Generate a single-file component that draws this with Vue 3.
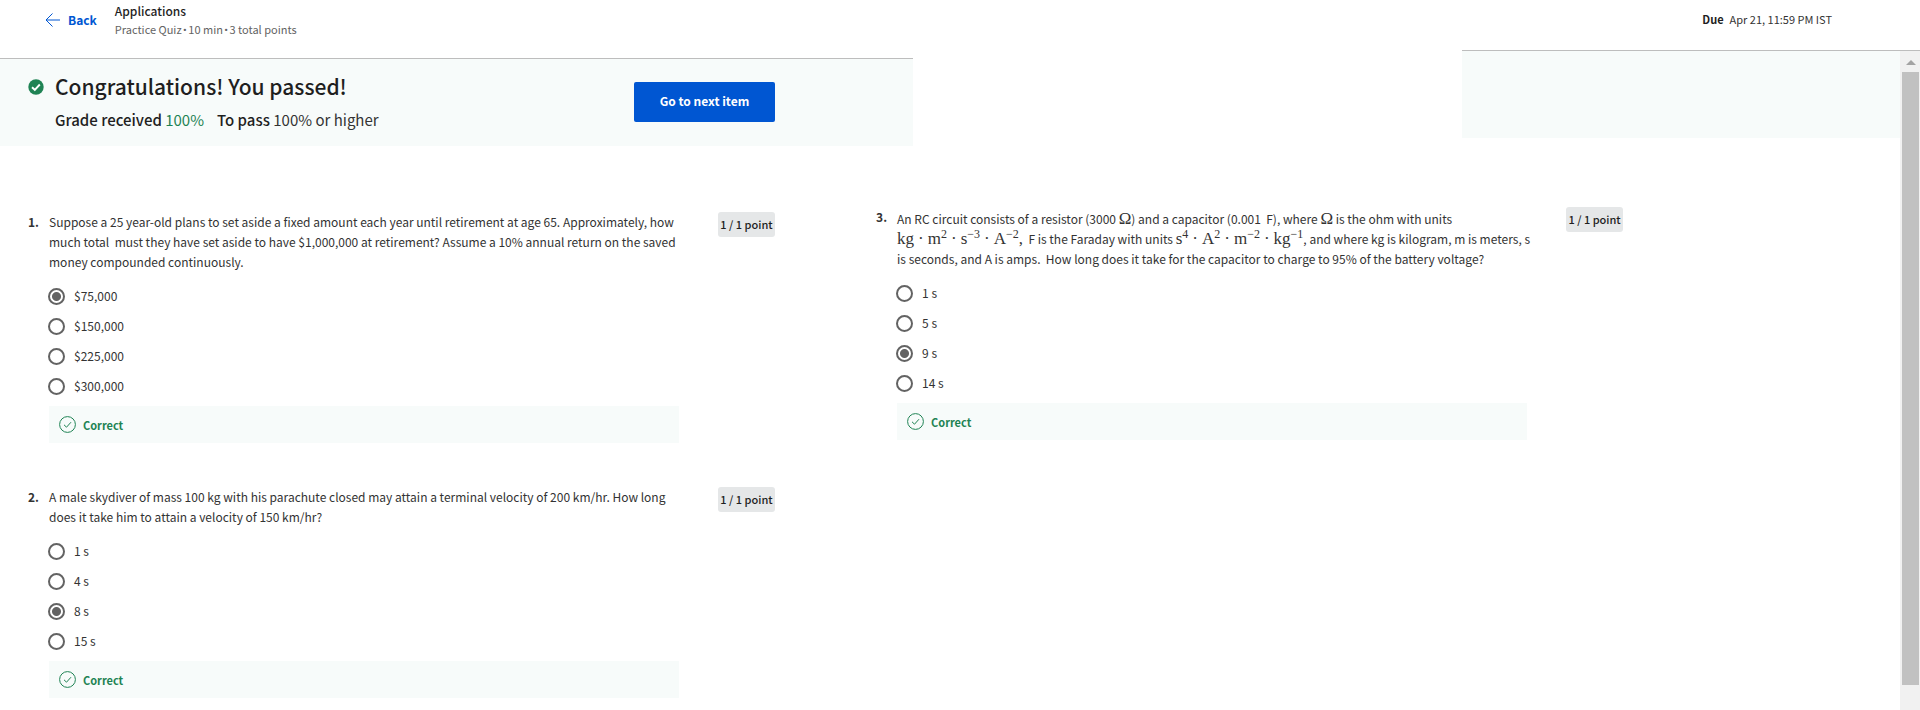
<script setup>
import { ref } from 'vue'

const columns = ref([
  {
    id: 'left',
    questions: [
      {
        number: 1,
        lines: [
          'Suppose a 25 year-old plans to set aside a fixed amount each year until retirement at age 65. Approximately, how',
          'much total\u00a0 must they have set aside to have $1,000,000 at retirement? Assume a 10% annual return on the saved',
          'money compounded continuously.',
        ],
        options: ['$75,000', '$150,000', '$225,000', '$300,000'],
        answer: '$75,000',
      },
      {
        number: 2,
        lines: [
          'A male skydiver of mass 100 kg with his parachute closed may attain a terminal velocity of 200 km/hr. How long',
          'does it take him to attain a velocity of 150 km/hr?',
        ],
        options: ['1 s', '4 s', '8 s', '15 s'],
        answer: '8 s',
      },
    ],
  },
  {
    id: 'right',
    questions: [
      {
        number: 3,
        formula: true,
        options: ['1 s', '5 s', '9 s', '14 s'],
        answer: '9 s',
      },
    ],
  },
])
</script>

<template>
  <div class="page">
    <header class="top">
      <section class="pane pane-main">
        <div class="bar bar-main">
          <a class="back" href="#">
            <svg width="15" height="14" viewBox="0 0 15 14" fill="none" stroke="currentColor" aria-hidden="true">
              <path d="M7.500 .5 1 7l6.500 6.500M1 7h14" />
            </svg>
            Back
          </a>
          <div class="heading">
            <div class="title">Applications</div>
            <div class="meta">Practice Quiz <span class="dot">•</span> 10 min <span class="dot">•</span> 3 total points</div>
          </div>
        </div>
        <div class="banner banner-result">
          <svg class="passed" width="16" height="16" viewBox="0 0 16 16" aria-hidden="true">
            <circle cx="8" cy="8" r="7.700" fill="#1f8354" />
            <path d="m4 8.200 2.800 2.600 5-5.300" fill="none" stroke="#fff" stroke-width="1.900" />
          </svg>
          <div class="result">
            <h1>Congratulations! You passed!</h1>
            <p class="grade">
              <span><b>Grade received</b> <span class="score">100%</span></span>
              <span><b>To pass</b> 100% or higher</span>
            </p>
          </div>
          <button class="next" type="button">Go to next item</button>
        </div>
      </section>
      <section class="pane pane-due">
        <div class="bar bar-due"><b>Due</b><span>Apr 21, 11:59 PM IST</span></div>
        <div class="banner"></div>
      </section>
    </header>

    <main class="columns">
      <div v-for="column in columns" :key="column.id" :class="['column', column.id]">
        <article v-for="q in column.questions" :key="q.number" class="question">
          <div class="number">{{ q.number }}.</div>
          <fieldset class="body">
            <legend v-if="q.formula" class="prompt tall">
              <span class="line">An RC circuit consists of a resistor (3000 <span class="math">Ω</span>) and a capacitor (0.001&nbsp; F), where <span class="math">Ω</span> is the ohm with units</span>
              <span class="line"><span class="math">kg<i>·</i>m<sup>2</sup><i>·</i>s<sup>−3</sup><i>·</i>A<sup>−2</sup>,</span>&nbsp; F is the Faraday with units <span class="math">s<sup>4</sup><i>·</i>A<sup>2</sup><i>·</i>m<sup>−2</sup><i>·</i>kg<sup>−1</sup></span>, and where kg is kilogram, m is meters, s</span>
              <span class="line">is seconds, and A is amps.&nbsp; How long does it take for the capacitor to charge to 95% of the battery voltage?</span>
            </legend>
            <legend v-else class="prompt">
              <span v-for="line in q.lines" :key="line" class="line">{{ line }}</span>
            </legend>
            <div class="options">
              <label v-for="option in q.options" :key="option" class="option">
                <input v-model="q.answer" type="radio" :name="'question-' + q.number" :value="option" />
                <span>{{ option }}</span>
              </label>
            </div>
            <div class="feedback">
              <svg width="17" height="17" viewBox="0 0 17 17" fill="none" stroke="currentColor" aria-hidden="true">
                <circle cx="8.500" cy="8.500" r="7.900" />
                <path d="m5 8.800 2.500 2.400 4.500-5" />
              </svg>
              Correct
            </div>
          </fieldset>
          <div class="points">1 / 1 point</div>
        </article>
      </div>
    </main>

    <div class="scrollbar" aria-hidden="true">
      <svg width="10" height="5" viewBox="0 0 10 5"><path d="M5 0 10 5H0z" fill="#a3a3a3" /></svg>
      <div class="thumb"></div>
    </div>
  </div>
</template>

<style>
body {
  margin: 0;
  background: #fff;
}
</style>

<style scoped>
.page {
  position: relative;
  min-height: 100vh;
  overflow: hidden;
  box-sizing: border-box;
  color: #333;
  font: 12px/20px "Noto Sans CJK SC", "Noto Sans", sans-serif;
}
.top {
  display: flex;
  justify-content: space-between;
  align-items: flex-start;
}
.pane-main {
  width: 47.55%;
}
.pane-due {
  width: 23.85%;
}
.bar {
  display: flex;
  box-sizing: border-box;
  border-bottom: 1px solid #bdbdbd;
  white-space: nowrap;
}
.bar-main {
  height: 59px;
  padding: 2px 45px;
  gap: 18px;
}
.back {
  display: flex;
  align-items: center;
  gap: 8px;
  height: 36px;
  color: #0056d2;
  font-weight: 700;
  text-decoration: none;
}
.title {
  line-height: 18px;
  color: #1f1f1f;
  font-weight: 500;
}
.meta {
  line-height: 18px;
  font-size: 11px;
  color: #636363;
}
.dot {
  margin: 0 -1px;
  font-family: Roboto, sans-serif;
}
.bar-due {
  justify-content: flex-end;
  gap: 6px;
  height: 51px;
  padding: 9px 88px 0 0;
  font-size: 11px;
}
.bar-due b {
  color: #1f1f1f;
}
.banner {
  display: flex;
  box-sizing: border-box;
  height: 87px;
  background: #f7fbfa;
}
.banner-result {
  padding: 11px 138px 0 28px;
}
.passed {
  flex: none;
  margin: 9px 11px 0 0;
}
.result {
  flex: 1;
  white-space: nowrap;
}
h1 {
  margin: 0;
  color: #1f1f1f;
  font-size: 21px;
  line-height: 32px;
  font-weight: 500;
}
.grade {
  display: flex;
  gap: 13px;
  margin: 6px 0 0;
  font-size: 15px;
  line-height: 24px;
}
.grade b {
  color: #1f1f1f;
  font-weight: 500;
}
.grade .score {
  color: #1f8354;
}
.next {
  width: 141px;
  height: 40px;
  margin-top: 12px;
  padding-bottom: 3px;
  border: 0;
  border-radius: 2px;
  background: #0056d2;
  color: #fff;
  font: inherit;
  font-weight: 700;
}
.columns {
  display: flex;
}
.column {
  box-sizing: border-box;
  display: flex;
  flex-direction: column;
  gap: 44px;
  padding: 66px 0 12px 28px;
}
.left {
  width: 44.17%;
}
.right {
  padding-top: 61px;
}
.question {
  display: flex;
  align-items: flex-start;
}
.number {
  width: 21px;
  font-weight: 700;
}
.body {
  width: 630px;
  min-width: 0;
  margin: 0;
  padding: 0;
  border: 0;
}
.prompt {
  padding: 0;
}
.tall {
  padding-top: 2px;
}
.line {
  display: block;
  height: 20px;
  white-space: nowrap;
}
.math {
  font-family: "Liberation Serif", serif;
  font-size: 17px;
  line-height: 1;
}
.math i {
  font-style: normal;
  margin: 0 4px;
}
.math sup {
  font-size: 12px;
  line-height: 0;
  vertical-align: 6px;
}
.options {
  margin: 9px 0 5px -1px;
}
.option {
  display: flex;
  align-items: center;
  gap: 9px;
  height: 30px;
}
.option input {
  appearance: none;
  box-sizing: border-box;
  width: 17px;
  height: 17px;
  margin: 0;
  border: 2px solid #636363;
  border-radius: 50%;
}
.option input:checked {
  background: radial-gradient(circle, #636363 4px, transparent 5px);
}
.feedback {
  display: flex;
  align-items: center;
  gap: 7px;
  height: 37px;
  padding-left: 10px;
  background: #f7fbfa;
  color: #1f8354;
  font-size: 11px;
  font-weight: 700;
}
.points {
  box-sizing: border-box;
  width: 57px;
  margin-left: 39px;
  border-radius: 3px;
  background: #e5e7e8;
  color: #1f1f1f;
  font-size: 11px;
  font-weight: 500;
  line-height: 25px;
  text-align: center;
  white-space: nowrap;
}
.scrollbar {
  position: absolute;
  top: 51px;
  right: 0;
  bottom: 0;
  box-sizing: border-box;
  display: flex;
  flex-direction: column;
  align-items: center;
  gap: 7px;
  width: 20px;
  padding: 9px 1px 25px 2px;
  background: #f1f1f1;
}
.thumb {
  flex: 1;
  width: 17px;
  background: #c1c1c1;
}
</style>
